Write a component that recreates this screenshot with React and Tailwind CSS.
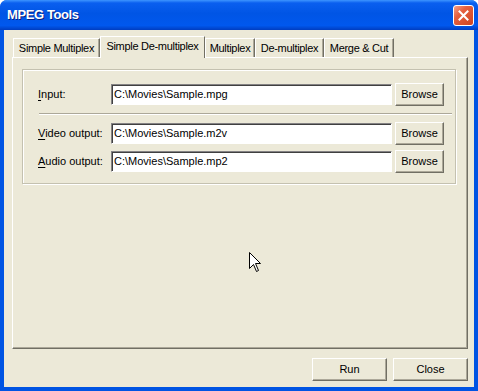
import React from 'react';

const font = "font-['Liberation_Sans',Arial,sans-serif]";

const tabs = [
  { label: 'Simple Multiplex', w: 'w-[87px]' },
  { label: 'Simple De-multiplex', w: 'w-[105px]', active: true },
  { label: 'Multiplex', w: 'w-[50px]' },
  { label: 'De-multiplex', w: 'w-[69px]' },
  { label: 'Merge & Cut', w: 'w-[70px]' },
];

const rows = [
  { key: 'I', rest: 'nput:', value: 'C:\\Movies\\Sample.mpg' },
  { key: 'V', rest: 'ideo output:', value: 'C:\\Movies\\Sample.m2v' },
  { key: 'A', rest: 'udio output:', value: 'C:\\Movies\\Sample.mp2' },
];

const Button = ({ children, className = '' }) => (
  <button
    className={`h-[23px] bg-[#ece9d8] border border-t-white border-l-white border-r-[#716f64] border-b-[#716f64] shadow-[inset_-1px_-1px_0_#aca899] text-[11px] text-black flex items-center justify-center ${className}`}
  >
    {children}
  </button>
);

const Field = ({ value }) => (
  <div className="w-[281px] h-[21px] bg-white border border-t-[#848284] border-l-[#848284] border-r-white border-b-white shadow-[inset_1px_1px_0_#404040] flex items-center pl-[2px] text-[11px] text-black">
    {value}
  </div>
);

const Row = ({ row }) => (
  <div className="flex items-center">
    <div className="w-[73px] text-[11px] text-black">
      <span className="underline underline-offset-2">{row.key}</span>
      {row.rest}
    </div>
    <Field value={row.value} />
    <Button className="w-[49px] ml-[3px]">Browse</Button>
  </div>
);

const Cursor = () => (
  <svg className="absolute left-[249px] top-[252px]" width="13" height="21" viewBox="0 0 13 21">
    <path d="M0.5 0.5 L0.5 16.5 L4.5 12.5 L7.5 19.5 L9.5 18.5 L6.5 11.5 L11.5 11.5 Z" fill="white" stroke="black" strokeWidth="1" />
  </svg>
);

export default function App() {
  return (
    <div className={`relative w-[478px] h-[391px] ${font} bg-[#0054e3] rounded-t-[7px] flex flex-col overflow-hidden`}>
      {/* Title bar */}
      <div className="h-[30px] shrink-0 flex items-center justify-between pl-[7px] pr-[4px] bg-[linear-gradient(180deg,#3d95ff_0%,#0a5fef_10%,#0055e5_45%,#0058ee_85%,#003dc0_100%)]">
        <span className="text-white font-bold text-[13px] tracking-[-0.4px] [text-shadow:1px_1px_0_#0a1f80]">
          MPEG Tools
        </span>
        <div className="w-[21px] h-[21px] rounded-[3px] border border-white bg-[linear-gradient(135deg,#f4a08a_0%,#e5603f_35%,#cf4420_100%)] flex items-center justify-center">
          <svg width="11" height="11" viewBox="0 0 11 11">
            <path d="M1.5 1.5 L9.5 9.5 M9.5 1.5 L1.5 9.5" stroke="white" strokeWidth="2" strokeLinecap="square" />
          </svg>
        </div>
      </div>

      {/* Client area */}
      <div className="flex-1 mx-[4px] mb-[4px] bg-[#ece9d8] flex flex-col pt-[6px] pl-[8px] pr-[6px]">
        {/* Tabs */}
        <div className="flex items-start h-[21px] pl-[1px] relative z-10">
          {tabs.map((t) =>
            t.active ? (
              <div
                key={t.label}
                className={`${t.w} h-[22px] bg-[#ece9d8] border border-b-0 border-t-white border-l-white border-r-[#716f64] flex items-center justify-center pb-[2px] text-[11px] tracking-[-0.3px] whitespace-nowrap text-black`}
              >
                {t.label}
              </div>
            ) : (
              <div
                key={t.label}
                className={`${t.w} h-[19px] mt-[2px] bg-[#ece9d8] border border-b-0 border-t-white border-l-white border-r-[#716f64] shadow-[inset_-1px_0_0_#aca899] flex items-center justify-center text-[11px] tracking-[-0.3px] whitespace-nowrap text-black`}
              >
                {t.label}
              </div>
            )
          )}
        </div>

        {/* Tab panel */}
        <div className="w-[456px] h-[292px] border border-t-white border-l-white border-r-[#716f64] border-b-[#716f64] shadow-[inset_-1px_-1px_0_#aca899] pt-[11px] pl-[9px]">
          <div className="w-[434px] border border-[#c4c1b0] shadow-[inset_1px_1px_0_white,1px_1px_0_white] pt-[13px] pb-[10px] pl-[15px]">
            <Row row={rows[0]} />
            <div className="ml-[1px] mt-[7px] w-[413px] h-[2px] border-t border-t-[#aca899] border-b border-b-white" />
            <div className="mt-[7px]">
              <Row row={rows[1]} />
            </div>
            <div className="mt-[5px]">
              <Row row={rows[2]} />
            </div>
          </div>
        </div>

        {/* Bottom buttons */}
        <div className="flex justify-end gap-[6px] mt-[9px]">
          <Button className="w-[75px]">Run</Button>
          <Button className="w-[75px]">Close</Button>
        </div>
      </div>

      <Cursor />
    </div>
  );
}
